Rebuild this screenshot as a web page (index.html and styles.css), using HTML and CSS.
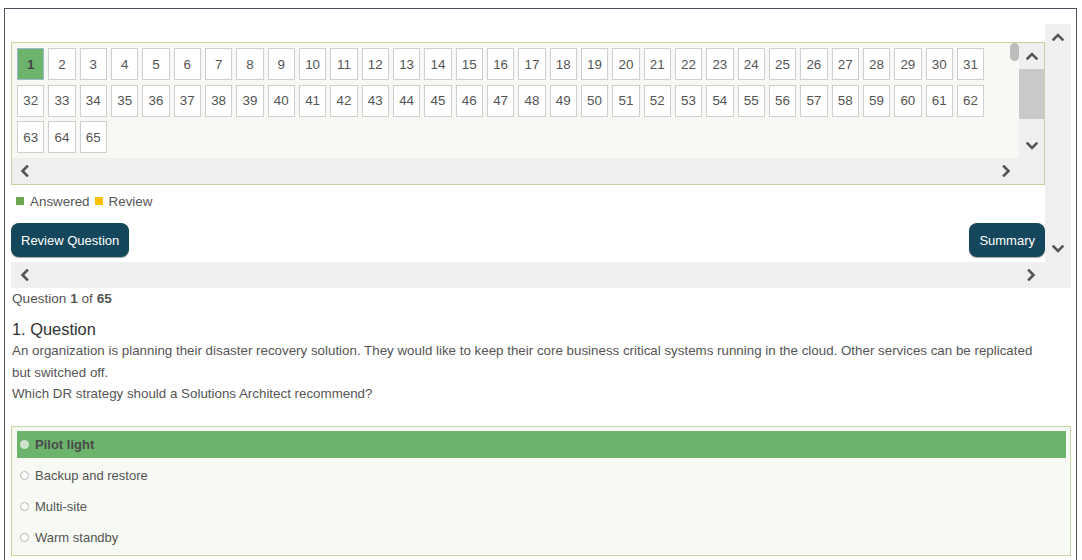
FILE: index.html
```html
<!DOCTYPE html>
<html>
<head>
<meta charset="utf-8">
<link rel="stylesheet" href="styles.css">
</head>
<body>
<div class="frame">
  <div class="scroller">
    <div class="scroll-content">
      <div class="panel">
        <div class="numbers">
          <div class="grid" id="grid"></div>
          <div class="pill"></div>
        </div>
        <div class="vbar inner-vbar">
          <svg class="chev" width="12" height="9" viewBox="0 0 12 9"><polyline points="1.5,7.5 6,3 10.5,7.5"/></svg>
          <div class="thumb"></div>
          <svg class="chev down" width="12" height="9" viewBox="0 0 12 9"><polyline points="1.5,1.5 6,6 10.5,1.5"/></svg>
        </div>
        <div class="hbar inner-hbar">
          <svg class="chev" width="9" height="12" viewBox="0 0 9 12"><polyline points="7,1.5 2.5,6 7,10.5"/></svg>
          <svg class="chev" width="9" height="12" viewBox="0 0 9 12"><polyline points="2,1.5 6.5,6 2,10.5"/></svg>
        </div>
      </div>
      <div class="legend">
        <span class="sq green"></span><span>Answered</span>
        <span class="sq orange"></span><span>Review</span>
      </div>
      <div class="buttons">
        <button class="btn">Review Question</button>
        <button class="btn">Summary</button>
      </div>
    </div>
    <div class="vbar outer-vbar">
      <svg class="chev" width="12" height="9" viewBox="0 0 12 9"><polyline points="1.5,7.5 6,3 10.5,7.5"/></svg>
      <svg class="chev" width="12" height="9" viewBox="0 0 12 9"><polyline points="1.5,1.5 6,6 10.5,1.5"/></svg>
    </div>
    <div class="hbar outer-hbar">
      <svg class="chev" width="9" height="12" viewBox="0 0 9 12"><polyline points="7,1.5 2.5,6 7,10.5"/></svg>
      <svg class="chev" width="9" height="12" viewBox="0 0 9 12"><polyline points="2,1.5 6.5,6 2,10.5"/></svg>
    </div>
  </div>

  <div class="counter">Question <b>1</b> of <b>65</b></div>
  <div class="q-title">1. Question</div>
  <div class="q-text">An organization is planning their disaster recovery solution. They would like to keep their core business critical systems running in the cloud. Other services can be replicated but switched off.<br>Which DR strategy should a Solutions Architect recommend?</div>

  <div class="options">
    <div class="opt selected"><span class="radio"></span>Pilot light</div>
    <div class="opt"><span class="radio"></span>Backup and restore</div>
    <div class="opt"><span class="radio"></span>Multi-site</div>
    <div class="opt"><span class="radio"></span>Warm standby</div>
  </div>
</div>
<script>
  var g = document.getElementById('grid');
  for (var i = 1; i <= 65; i++) {
    var d = document.createElement('div');
    d.className = 'num' + (i === 1 ? ' current' : '');
    d.textContent = i;
    g.appendChild(d);
  }
</script>
</body>
</html>
```

FILE: styles.css
```css
html, body {
  margin: 0;
  padding: 0;
  background: #fff;
}
body {
  font-family: "Liberation Sans", Arial, sans-serif;
  font-size: 13px;
  color: #555;
}
.frame {
  margin: 8px 5px 0 4px;
  border: 1px solid #4b5262;
  border-bottom: none;
  padding: 15px 5px 20px 6px;
  height: 600px;
  box-sizing: border-box;
}
.scroller {
  display: grid;
  grid-template-columns: 1fr 26px;
  grid-template-rows: 238px 26px;
  background: #efefef;
}
.scroll-content {
  background: #fff;
  padding-top: 18px;
  overflow: hidden;
}
.panel {
  border: 1px solid #c6d49e;
  display: grid;
  grid-template-columns: 1fr 25px;
  grid-template-rows: 115px 26px;
  background: #efefef;
}
.numbers {
  position: relative;
  background: #f7f8f3;
  padding: 5px 0 0 5px;
}
.grid {
  display: grid;
  grid-template-columns: repeat(31, 27.33px);
  grid-auto-rows: 32px;
  column-gap: 4px;
  row-gap: 4.67px;
}
.num {
  box-sizing: border-box;
  border: 1px solid #cfcfcf;
  background: #fff;
  display: flex;
  align-items: center;
  justify-content: center;
  color: #555;
  font-size: 13.4px;
}
.num.current {
  background: #6cb46c;
  border-color: #9db7d4;
  font-weight: bold;
  color: #444;
}
.pill {
  position: absolute;
  top: 0;
  right: 0;
  width: 9px;
  height: 18px;
  border-radius: 5px;
  background: #bdbdbd;
}
.chev polyline {
  fill: none;
  stroke: #555;
  stroke-width: 2.6;
  stroke-linecap: square;
}
.vbar {
  display: flex;
  flex-direction: column;
  align-items: center;
}
.inner-vbar {
  padding-top: 8px;
}
.inner-vbar .thumb {
  align-self: stretch;
  height: 50px;
  background: #c9c9c9;
  margin-top: 9px;
}
.inner-vbar .down {
  margin-top: 23px;
}
.hbar {
  display: flex;
  align-items: center;
  justify-content: space-between;
}
.inner-hbar {
  grid-column: 1 / 3;
  padding: 0 33px 0 8px;
}
.outer-vbar {
  justify-content: space-between;
  padding: 8px 0 8px;
}
.outer-hbar {
  padding: 0 9px 0 9px;
}
.legend {
  display: flex;
  align-items: center;
  height: 20px;
  margin-top: 6px;
  padding-left: 5px;
  font-size: 13.4px;
}
.sq {
  display: inline-block;
  width: 8px;
  height: 8px;
  margin-right: 6px;
}
.sq.green { background: #6aa84f; }
.sq.orange { background: #ffc000; margin-left: 5px; }
.buttons {
  display: flex;
  justify-content: space-between;
  margin-top: 12px;
}
.btn {
  height: 34px;
  padding: 0 10px;
  border: none;
  border-radius: 8px;
  background: #14475c;
  color: #fff;
  font-family: "Liberation Sans", Arial, sans-serif;
  font-size: 13px;
  box-shadow: 0 1px 1px rgba(0, 0, 0, 0.35);
}
.counter {
  line-height: 20px;
  margin-top: 1px;
  padding-left: 1px;
  font-size: 13.6px;
}
.q-title {
  font-size: 16.4px;
  line-height: 22px;
  margin-top: 9px;
  padding-left: 1px;
  color: #333;
}
.q-text {
  font-size: 13.35px;
  line-height: 21.5px;
  padding-left: 1px;
  padding-right: 34px;
}
.options {
  margin-top: 21px;
  border: 1px solid #c6d49e;
  background: #f7f9f4;
  padding: 4px 4px 4px 5px;
  display: flex;
  flex-direction: column;
  gap: 4px;
}
.opt {
  height: 27px;
  display: flex;
  align-items: center;
}
.radio {
  width: 9px;
  height: 9px;
  box-sizing: border-box;
  border: 1px solid #b8b8b8;
  border-radius: 50%;
  background: #fff;
  margin: 0 6px 0 3px;
}
.opt.selected {
  background: #6cb46c;
  font-weight: bold;
  color: #4a4a4a;
}
.opt.selected .radio {
  border: none;
  background: #cfe2cf;
}
```
